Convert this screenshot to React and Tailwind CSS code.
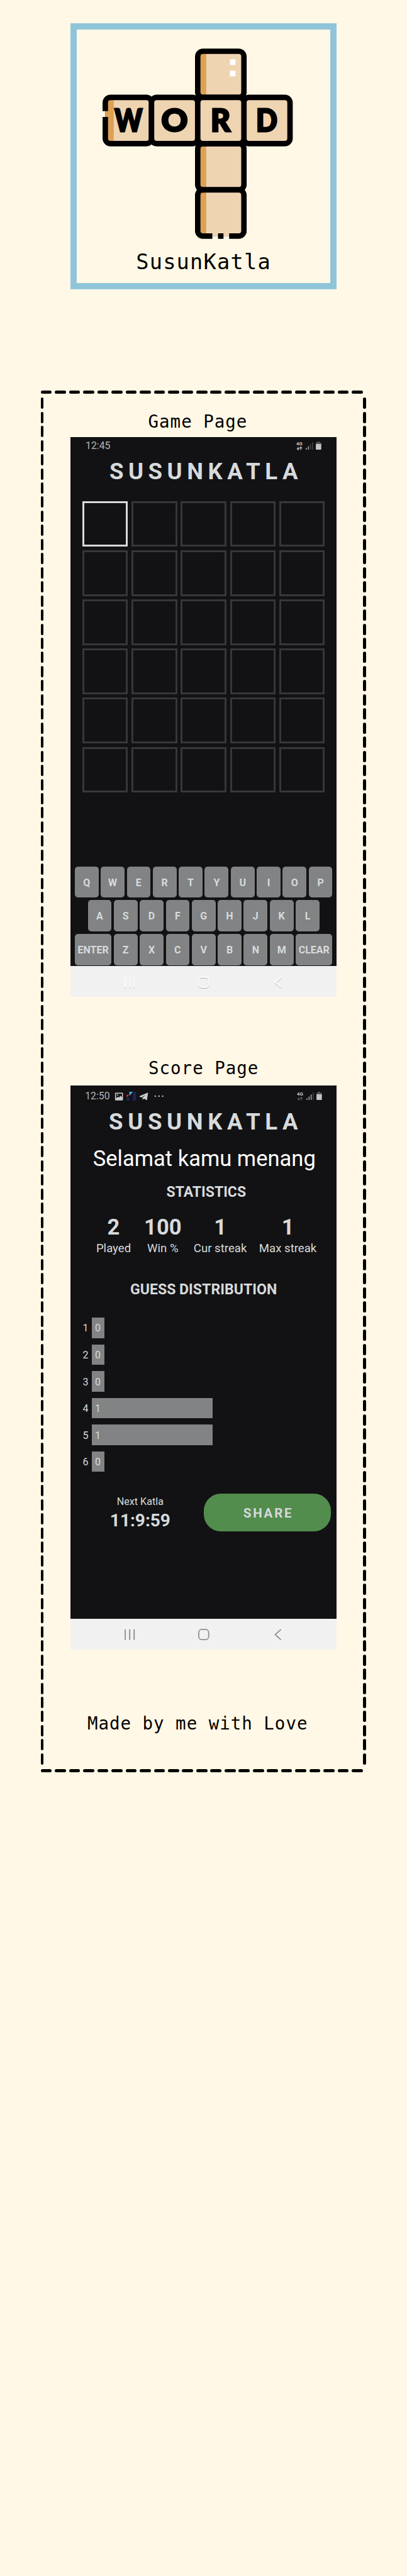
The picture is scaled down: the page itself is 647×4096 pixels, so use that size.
function Cell({ x, y, strip }) {
  return (
    <g>
      <rect x={x} y={y} width="245.3" height="245.3" rx="28" fill="#efd4b2" />
      {strip && <rect x={x + 12} y={y + 12} width="33" height="221" rx="3" fill="#dda155" />}
      <rect x={x} y={y} width="245.3" height="245.3" rx="28" fill="none" stroke="#000" strokeWidth="29" />
    </g>
  );
}

function Logo() {
  const letters = [
    ["W", 309, 147],
    ["O", 557, 140],
    ["R", 819, 104],
    ["D", 1060, 113],
  ];
  return (
    <svg className="h-[303px] w-[302.5px] shrink-0" viewBox="245 197 1010 1012">
      <Cell x={750.3} y={212} strip />
      <Cell x={259.5} y={457} strip />
      <Cell x={504.8} y={457} />
      <Cell x={995} y={457} />
      <Cell x={750.3} y={702.5} strip />
      <Cell x={750.3} y={948} strip />
      <Cell x={750.3} y={457} />
      <rect x="921" y="255" width="30" height="30" fill="#fff" />
      <rect x="921" y="315" width="30" height="30" fill="#fff" />
      <rect x="244" y="530" width="15" height="31" fill="#fff8e6" />
      <rect x="259" y="530" width="16" height="31" fill="#dda155" />
      <path d="M828 1177h30v16h-30zM887 1177h30v16h-30z" fill="#efd4b2" />
      <path d="M828 1193h30v17h-30zM887 1193h30v17h-30z" fill="#fff8e6" />
      {letters.map(([c, x, w]) => (
        <text
          key={c}
          x={x}
          y="639"
          textLength={w}
          lengthAdjust="spacingAndGlyphs"
          className="font-['Lato',sans-serif] text-[166px] font-black"
          stroke="#000"
          strokeWidth="10"
        >
          {c}
        </text>
      ))}
    </svg>
  );
}

function HDashes() {
  return (
    <div className="flex w-[512px] justify-between">
      {Array.from({ length: 23 }, (_, i) => (
        <div key={i} className="h-[5px] w-[17.7px] rounded-full bg-black" />
      ))}
    </div>
  );
}

function VDashes() {
  return (
    <div className="flex w-[4.7px] flex-col justify-between">
      {Array.from({ length: 97 }, (_, i) => (
        <div key={i} className="h-[18px] w-full rounded-full bg-black" />
      ))}
    </div>
  );
}

function Signals({ bright, arrows }) {
  const bars = [
    [17, 12.5, 3],
    [20.7, 9.5, 6],
    [24.4, 6, 9.5],
    [28.1, 2.5, 13],
  ];
  return (
    <svg className="h-[15.3px] w-[41.3px]" viewBox="0 0 46 17">
      <text x="0" y="8" fill="#c4c4c4" className="font-['Roboto',sans-serif] text-[8.6px] font-bold">
        4G
      </text>
      <g stroke={arrows} strokeWidth="1.4" fill="none">
        <path d="M3.2 10.5v5M1.2 13.4l2 2.2 2-2.2M8 16v-5M6 13l2-2.2 2 2.2" />
      </g>
      {bars.map(([x, y, h], i) => (
        <rect key={x} x={x} y={y} width="1.5" height={h} fill={i < bright ? "#bdbdbd" : "#505050"} />
      ))}
      <path d="M37.2 1h4v1.8h3V6H34.6V2.8h2.6z" fill="#555" />
      <path d="M34.6 5.6h9.6v8.8q0 1.3-1.3 1.3h-7q-1.3 0-1.3-1.3z" fill="#c6c6c6" />
    </svg>
  );
}

function Notifications() {
  return (
    <svg className="ml-[7px] h-[16.2px] w-[79.1px]" viewBox="0 0 88 18">
      <rect x="1" y="2.7" width="14" height="13.6" rx="1" fill="#c9c9c9" />
      <path d="M2.7 4.5h10.6v6.2l-2.6-2.6-2.8 3.1-1.9-1.3-3.3 2.6z" fill="#131314" />
      <circle cx="5.4" cy="7" r="1.2" fill="#c9c9c9" />
      <path d="M21.3 11.2V6.5h5z" fill="#c23a36" />
      <path d="M26.3 1.2h6.2l-5 6h-1.2z" fill="#45aede" />
      <path d="M33 1.2h5.2v15.6h-5.6V6.5zM21.3 12l3.2-1 1.8 1v4.8h-5z" fill="#1d2355" />
      <path d="M43.3 9.1 59.4 2.6 57.3 16l-5.2-3-2.3 2.4-.3-3.6 5.6-5.2-7.2 4.5z" fill="#d0d0d0" />
      <circle cx="72.2" cy="8.8" r="1.3" fill="#c9c9c9" />
      <circle cx="78.7" cy="8.8" r="1.3" fill="#c9c9c9" />
      <circle cx="85.2" cy="8.8" r="1.3" fill="#c9c9c9" />
    </svg>
  );
}

function NavIcons({ color, shadow }) {
  const cls = shadow
    ? "h-[18px] w-[18px] drop-shadow-[0_1px_0.6px_rgba(0,0,0,0.28)]"
    : "h-[18px] w-[18px]";
  return (
    <div className="flex h-[48.8px] items-center justify-between bg-[#f1f1f1] pt-[2px] pr-[83.8px] pl-[84.9px]">
      <svg className={cls} viewBox="0 0 20 20" fill="none" stroke={color} strokeWidth="2.1" strokeLinecap="round">
        <path d="M2.3 1.5v17.2M10.2 1.5v17.2M18 1.5v17.2" />
      </svg>
      <svg className={cls} viewBox="0 0 20 20" fill="none" stroke={color} strokeWidth="2">
        <rect x="1" y="1" width="17.6" height="18" rx="5.5" />
      </svg>
      <svg className={cls} viewBox="0 0 20 20" fill="none" stroke={color} strokeWidth="2.1" strokeLinecap="round" strokeLinejoin="round">
        <path d="M14.5 1.5 5 10.1l9.5 8.6" />
      </svg>
    </div>
  );
}

function Key({ label }) {
  return (
    <div
      className={
        "flex h-[49.7px] items-center justify-center rounded-[5px] bg-[#818384] pt-[2.5px] text-base leading-none font-bold text-[#d7dadc] " +
        (label.length > 1 ? "w-[58.3px]" : "w-[37.7px]")
      }
    >
      {label}
    </div>
  );
}

function GamePhone() {
  const rows = [
    "QWERTYUIOP".split(""),
    "ASDFGHJKL".split(""),
    ["ENTER", ..."ZXCVBNM".split(""), "CLEAR"],
  ];
  return (
    <div className="mt-[10.2px] w-[423.2px] bg-[#121214] font-['Roboto',sans-serif]">
      <div className="flex h-[841.6px] flex-col">
        <div className="flex h-[37.5px] items-start justify-between pt-[6.5px] pr-[22.8px] pl-6">
          <div className="text-[15.8px] leading-none text-[#b4b4b4]">12:45</div>
          <Signals bright={2} arrows="#c4c4c4" />
        </div>
        <div className="h-[36.6px] pl-[61.8px] text-[36.6px] leading-none font-bold tracking-[7.5px] text-[#d7dadc]">
          SUSUNKATLA
        </div>
        <div className="mt-[27.7px] ml-[18.8px] grid w-[385.4px] grid-cols-5 gap-x-[5.7px] gap-y-[5.5px]">
          {Array.from({ length: 30 }, (_, i) => (
            <div
              key={i}
              className={"h-[72.7px] border-3 " + (i === 0 ? "border-[#d7dadc]" : "border-[#37373a]")}
            />
          ))}
        </div>
        <div className="mt-[117.3px] flex flex-col items-center gap-[4px]">
          {rows.map((row) => (
            <div key={row[0]} className="flex gap-[3.65px]">
              {row.map((k) => (
                <Key key={k} label={k} />
              ))}
            </div>
          ))}
        </div>
      </div>
      <NavIcons color="#ffffff" shadow />
    </div>
  );
}

function Stat({ value, label, className }) {
  return (
    <div className={"flex flex-col items-center " + className}>
      <div className="h-[34.6px] text-[34.6px] leading-none font-bold">{value}</div>
      <div className="mt-[7.3px] h-[18.6px] text-[18.6px] leading-none whitespace-nowrap">{label}</div>
    </div>
  );
}

function ScorePhone() {
  return (
    <div className="mt-[13.4px] w-[423.2px] bg-[#121214] font-['Roboto',sans-serif] text-[#d7dadc]">
      <div className="flex h-[847.5px] flex-col">
        <div className="flex h-[40.2px] items-start pt-[8.5px] pr-[21.9px] pl-[23.1px]">
          <div className="text-[15.8px] leading-none text-[#b4b4b4]">12:50</div>
          <Notifications />
          <div className="ml-auto">
            <Signals bright={3} arrows="#5a5a5a" />
          </div>
        </div>
        <div className="h-[36.6px] pl-[61px] text-[36.6px] leading-none font-bold tracking-[7.6px]">
          SUSUNKATLA
        </div>
        <div className="mt-[22.3px] h-[34.6px] pl-[35.6px] text-[34.56px] leading-none whitespace-nowrap text-white">
          Selamat kamu menang
        </div>
        <div className="mt-[24.5px] h-[23px] pl-[152.4px] text-[23px] leading-none font-bold">STATISTICS</div>
        <div className="mt-[26.9px] flex pl-[40.8px]">
          <Stat value="2" label="Played" className="w-[55.3px]" />
          <Stat value="100" label="Win %" className="ml-[25.9px] w-[49.5px]" />
          <Stat value="1" label="Cur streak" className="ml-[24.3px] w-[84.5px]" />
          <Stat value="1" label="Max streak" className="ml-[19.5px] w-[91.4px]" />
        </div>
        <div className="mt-[44px] h-[23.1px] pl-[94.9px] text-[23.1px] leading-none font-bold">
          GUESS DISTRIBUTION
        </div>
        <div className="mt-[33.5px] flex flex-col gap-[10.35px] text-base leading-none">
          {[0, 0, 0, 1, 1, 0].map((n, i) => (
            <div key={i} className="flex h-[32.2px]">
              <div className="flex w-[33.5px] items-center pt-[2px] pl-[19.5px]">{i + 1}</div>
              <div
                className={
                  "flex items-center bg-[#818384] pt-[2px] pl-[5.4px] " + (n ? "w-[192.4px]" : "w-[20.8px]")
                }
              >
                {n}
              </div>
            </div>
          ))}
        </div>
        <div className="mt-[35.2px] flex">
          <div className="ml-[10px] flex w-[201.6px] flex-col items-center pt-[4.2px]">
            <div className="h-[16.2px] text-[16.2px] leading-none">Next Katla</div>
            <div className="mt-[7.8px] text-[28px] leading-none font-bold">11:9:59</div>
          </div>
          <div className="flex h-[59.6px] w-[202.8px] items-center justify-center rounded-[27px] bg-[#538d4e] pt-[3px] pl-[3px] text-[20.5px] leading-none font-bold tracking-[2.8px]">
            SHARE
          </div>
        </div>
      </div>
      <NavIcons color="#8f8f8f" />
    </div>
  );
}

function Heading({ children, className }) {
  return (
    <div
      className={
        "h-[27.5px] w-[423.2px] text-center font-['DejaVu_Sans_Mono',monospace] text-[27.5px] leading-none tracking-[0.97px] whitespace-nowrap text-black " +
        className
      }
    >
      {children}
    </div>
  );
}

export default function App() {
  return (
    <div className="h-[4096px] w-[647px] overflow-hidden bg-[#fff8e6] pt-[37.3px]">
      <div className="ml-[112.3px] flex h-[422.4px] w-[422.4px] flex-col border-[10px] border-[#90c5d9] pt-[29.5px] pl-[40.8px]">
        <Logo />
        <div className="mt-[20px] w-[321px] text-center font-['DejaVu_Sans_Mono',monospace] text-[33.7px] leading-none tracking-[1.2px] text-black">
          SusunKatla
        </div>
      </div>
      <div className="mt-[161.2px] ml-[64.8px] w-[517.4px]">
        <HDashes />
        <div className="mt-[6.4px] flex h-[2173.6px]">
          <VDashes />
          <div className="flex w-[508px] flex-col pl-[42.6px]">
            <Heading className="mt-[24.9px] pr-[18.5px]">Game Page</Heading>
            <GamePhone />
            <Heading className="mt-[100.1px]">Score Page</Heading>
            <ScorePhone />
            <Heading className="mt-[104.7px] pr-[19px]">Made by me with Love</Heading>
          </div>
          <VDashes />
        </div>
        <div className="mt-[7px]">
          <HDashes />
        </div>
      </div>
    </div>
  );
}
